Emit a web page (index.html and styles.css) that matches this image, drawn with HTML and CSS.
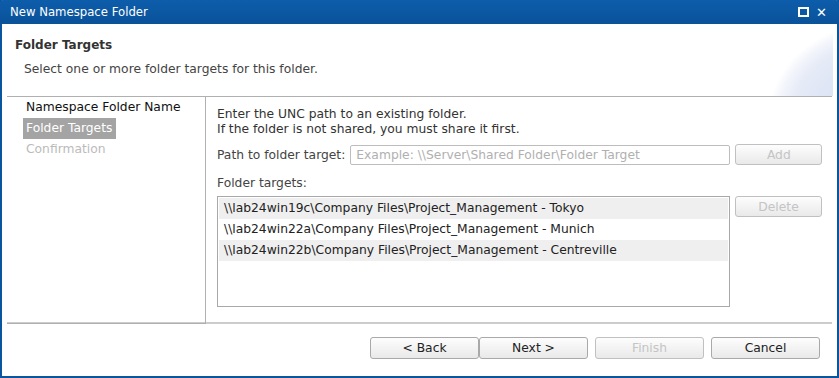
FILE: index.html
```html
<!DOCTYPE html>
<html lang="en">
<head>
  <meta charset="UTF-8" />
  <title>New Namespace Folder</title>
  <link rel="stylesheet" href="styles.css">
</head>
<body>
  <div class="ventana">
    <div class="titulo">
      <span>New Namespace Folder</span>
      <div class="controles">
        <span class="max"></span>
        <span class="cerrar">✕</span>
      </div>
    </div>

    <div class="cabecera">
      <h1>Folder Targets</h1>
      <p>Select one or more folder targets for this folder.</p>
    </div>

    <div class="cuerpo">
      <ul class="pasos">
        <li>Namespace Folder Name</li>
        <li class="activo">Folder Targets</li>
        <li class="inactivo">Confirmation</li>
      </ul>

      <div class="contenido">
        <p class="ayuda">Enter the UNC path to an existing folder.<br>If the folder is not shared, you must share it first.</p>
        <div class="fila">
          <label>Path to folder target:</label>
          <input type="text" placeholder="Example: \\Server\Shared Folder\Folder Target">
          <button class="btn" disabled>Add</button>
        </div>
        <div class="etiqueta">Folder targets:</div>
        <div class="fila lista-fila">
          <div class="lista">
            <div class="item par">\\lab24win19c\Company Files\Project_Management - Tokyo</div>
            <div class="item">\\lab24win22a\Company Files\Project_Management - Munich</div>
            <div class="item par">\\lab24win22b\Company Files\Project_Management - Centreville</div>
          </div>
          <button class="btn" disabled>Delete</button>
        </div>
      </div>
    </div>

    <div class="pie">
      <button class="btn ancho pegado">&lt; Back</button>
      <button class="btn ancho">Next &gt;</button>
      <button class="btn ancho" disabled>Finish</button>
      <button class="btn ancho">Cancel</button>
    </div>
  </div>
</body>
</html>
```

FILE: styles.css
```css
body {
  margin: 0; padding: 0;
  font-family: 'DejaVu Sans', Verdana, sans-serif;
  font-size: 12.3px;
  color: #222;
  background: #fff;
}

.ventana {
  width: 839px; height: 378px;
  box-sizing: border-box;
  border: 2px solid #0b559e;
  border-top: none;
  display: flex;
  flex-direction: column;
  background: #fff;
}

.titulo {
  height: 24px;
  margin: 0 -2px;
  padding: 0 12px 0 10px;
  background: linear-gradient(#0d5dab, #0a5299);
  color: #fff;
  font-size: 11.7px;
  display: flex;
  align-items: center;
  justify-content: space-between;
  border-radius: 3px 3px 0 0;
}

.controles {
  display: flex;
  align-items: center;
  gap: 7px;
}

.max {
  width: 7px; height: 6px;
  border: 2px solid #fff;
}

.cerrar {
  font-size: 13px;
  font-weight: bold;
}

/* cabecera con el adorno azul claro de la esquina */
.cabecera {
  height: 72px;
  box-sizing: border-box;
  padding: 14px 0 0 13px;
  background:
    radial-gradient(ellipse 114px 94px at 881px 88px, #dae2f3 0%, #dfe6f5 60%, #e6ebf7 80%, #f3f5fb 92%, rgba(255,255,255,0) 100%),
    #fff;
  background-size: 831px 68px, auto;
  background-repeat: no-repeat;
  background-position: 0 4px, 0 0;
}

.cabecera h1 {
  margin: 0;
  font-size: 12px;
  font-weight: bold;
  color: #333;
}

.cabecera p {
  margin: 10px 0 0 9px;
  color: #444;
}

.cuerpo {
  display: flex;
  height: 228px;
  margin: 0 5px;
  border-top: 1px solid #b0b0b0;
  border-bottom: 2px solid #cccccc;
  box-sizing: border-box;
}

.pasos {
  list-style: none;
  margin: 0;
  padding: 0 0 0 16px;
  width: 199px;
  box-sizing: border-box;
  border-right: 1px solid #b0b0b0;
  border-bottom: 1px solid #b0b0b0;
  margin-bottom: -2px;
}

.pasos li {
  padding: 0 4px 0 3px;
  height: 21px;
  line-height: 21px;
  color: #111;
  display: table;
}

.pasos li.activo {
  background: #a4a4a4;
  color: #fff;
}

.pasos li.inactivo { color: #bbbbbb; }

.contenido {
  flex: 1;
  padding: 10px 0 0 11px;
}

.ayuda {
  margin: 0;
  line-height: 15px;
  color: #333;
}

.fila {
  display: flex;
  align-items: center;
  gap: 5px;
  margin-top: 7px;
}

.fila label { color: #444; }

.fila input {
  width: 380px; height: 20px;
  box-sizing: border-box;
  border: 1px solid #bdbdbd;
  border-radius: 2px;
  padding: 0 5px;
  font: inherit;
  color: #333;
}

.fila input::placeholder { color: #b0b0b0; }

.etiqueta {
  margin-top: 11px;
  color: #444;
}

.lista-fila {
  align-items: flex-start;
  margin-top: 6px;
}

.lista {
  width: 513px; height: 111px;
  box-sizing: border-box;
  border: 1px solid #a8a8a8;
  padding: 1px;
}

.item {
  height: 21px;
  line-height: 21px;
  padding-left: 5px;
  color: #222;
}

.item.par { background: #efefef; }

.btn {
  width: 87px; height: 21px;
  box-sizing: border-box;
  border: 1px solid #a9a9a9;
  border-radius: 3px;
  background: linear-gradient(#fdfdfd, #e9e9e9);
  font: inherit;
  color: #222;
  padding: 0;
}

.btn:disabled { color: #c4c4c4; border-color: #c0c0c0; }

.pie {
  display: flex;
  justify-content: flex-end;
  gap: 7px;
  padding: 13px 17px 0 0;
}

.btn.ancho { width: 109px; height: 22px; }
.btn.pegado { margin-right: -7px; }
```
